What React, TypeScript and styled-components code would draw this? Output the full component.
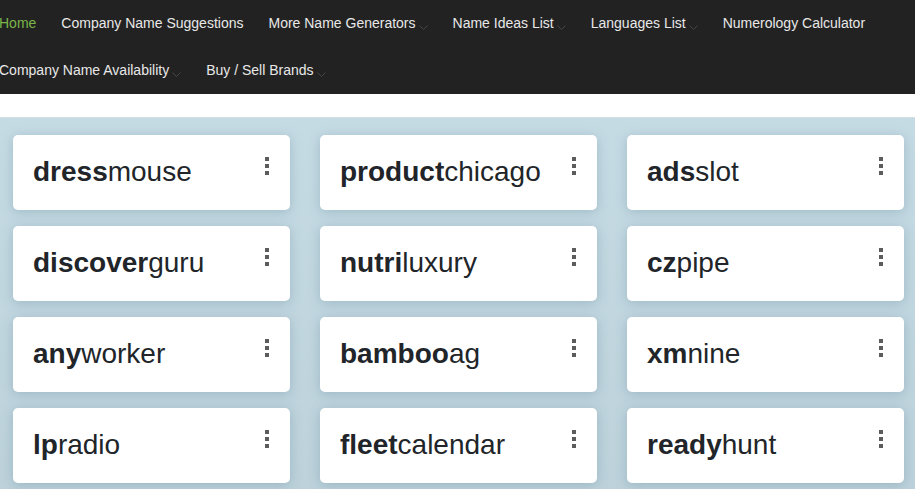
import React from "react";
import styled, { createGlobalStyle } from "styled-components";

const GlobalStyle = createGlobalStyle`
  html, body {
    margin: 0;
    padding: 0;
    background: #c4d9e2;
    font-family: "Liberation Sans", Arial, sans-serif;
  }
`;

const navRows = [
  [
    { label: "Home", active: true },
    { label: "Company Name Suggestions" },
    { label: "More Name Generators", drop: true },
    { label: "Name Ideas List", drop: true },
    { label: "Languages List", drop: true },
    { label: "Numerology Calculator" },
  ],
  [
    { label: "Company Name Availability", drop: true },
    { label: "Buy / Sell Brands", drop: true },
  ],
];

const names = [
  ["dress", "mouse"],
  ["product", "chicago"],
  ["ads", "slot"],
  ["discover", "guru"],
  ["nutri", "luxury"],
  ["cz", "pipe"],
  ["any", "worker"],
  ["bamboo", "ag"],
  ["xm", "nine"],
  ["lp", "radio"],
  ["fleet", "calendar"],
  ["ready", "hunt"],
];

const Chevron = () => (
  <svg width="9" height="6" viewBox="0 0 9 6" fill="none">
    <path d="M0.5 0.5 L4.5 4.5 L8.5 0.5" stroke="#454545" strokeWidth="1" />
  </svg>
);

const App = () => {
  return (
    <Page>
      <GlobalStyle />
      <NavBar>
        {navRows.map((row, i) => (
          <NavRow key={i}>
            {row.map((item) => (
              <NavItem key={item.label} $active={item.active}>
                {item.label}
                {item.drop && (
                  <Caret>
                    <Chevron />
                  </Caret>
                )}
              </NavItem>
            ))}
          </NavRow>
        ))}
      </NavBar>
      <Strip />
      <Grid>
        {names.map(([bold, rest]) => (
          <Card key={bold + rest}>
            <Name>
              <b>{bold}</b>
              {rest}
            </Name>
            <Dots>
              <i />
              <i />
              <i />
            </Dots>
          </Card>
        ))}
      </Grid>
    </Page>
  );
};

const Page = styled.div`
  min-height: 489px;
  background: linear-gradient(180deg, #c8dee7 0%, #bdd2db 100%);
  overflow: hidden;
`;

const NavBar = styled.nav`
  background: #222222;
  height: 94px;
  display: grid;
  grid-template-rows: 45px 49px;
`;

const NavRow = styled.div`
  display: flex;
  align-items: center;
  margin-left: -13.5px;
`;

const NavItem = styled.div<{ $active?: boolean }>`
  display: flex;
  align-items: baseline;
  padding: 0 12.5px;
  font-size: 14px;
  color: ${(p) => (p.$active ? "#7ab648" : "#e8e8e8")};
  white-space: nowrap;
`;

const Caret = styled.span`
  display: inline-flex;
  margin-left: 3px;
  transform: translateY(3px);
`;

const Strip = styled.div`
  height: 23px;
  background: #ffffff;
  border-bottom: 1px solid #d5dcdf;
`;

const Grid = styled.div`
  display: grid;
  grid-template-columns: repeat(3, 277px);
  column-gap: 30px;
  row-gap: 16px;
  padding: 17px 0 0 13px;
`;

const Card = styled.div`
  position: relative;
  height: 75px;
  background: #ffffff;
  border-radius: 5px;
  box-shadow: 0 2px 12px rgba(90, 130, 150, 0.35);
  display: flex;
  align-items: center;
  padding-left: 20px;
`;

const Name = styled.div`
  font-size: 28px;
  color: #212529;
  margin-top: -2px;
  b {
    font-weight: 700;
  }
`;

const Dots = styled.div`
  position: absolute;
  top: 22px;
  right: 21px;
  display: flex;
  flex-direction: column;
  gap: 3.5px;
  i {
    display: block;
    width: 4px;
    height: 3.5px;
    background: #5c5c5c;
  }
`;

export default App;
